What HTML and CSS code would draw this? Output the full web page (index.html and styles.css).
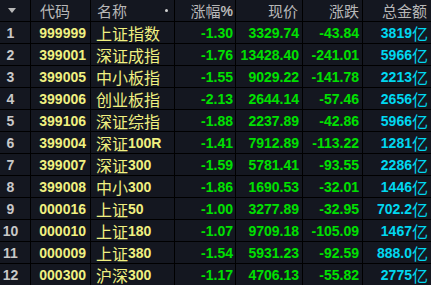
FILE: index.html
```html
<!DOCTYPE html>
<html lang="zh">
<head>
<meta charset="utf-8">
<link rel="stylesheet" href="styles.css">
</head>
<body>
<div class="grid">
  <div class="h c-idx"><span class="tri"></span></div>
  <div class="h c-code">代码</div>
  <div class="h c-name">名称<span class="dot"></span></div>
  <div class="h c-pct">涨幅<b>%</b></div>
  <div class="h c-num">现价</div>
  <div class="h c-chg">涨跌</div>
  <div class="h c-amt">总金额</div>

  <div class="idx">1</div><div class="code">999999</div><div class="name">上证指数</div><div class="g pct">-1.30</div><div class="g price">3329.74</div><div class="g chg">-43.84</div><div class="amt">3819<span>亿</span></div>
  <div class="idx">2</div><div class="code">399001</div><div class="name">深证成指</div><div class="g pct">-1.76</div><div class="g price">13428.40</div><div class="g chg">-241.01</div><div class="amt">5966<span>亿</span></div>
  <div class="idx">3</div><div class="code">399005</div><div class="name">中小板指</div><div class="g pct">-1.55</div><div class="g price">9029.22</div><div class="g chg">-141.78</div><div class="amt">2213<span>亿</span></div>
  <div class="idx">4</div><div class="code">399006</div><div class="name">创业板指</div><div class="g pct">-2.13</div><div class="g price">2644.14</div><div class="g chg">-57.46</div><div class="amt">2656<span>亿</span></div>
  <div class="idx">5</div><div class="code">399106</div><div class="name">深证综指</div><div class="g pct">-1.88</div><div class="g price">2237.89</div><div class="g chg">-42.86</div><div class="amt">5966<span>亿</span></div>
  <div class="idx">6</div><div class="code">399004</div><div class="name">深证<b>100R</b></div><div class="g pct">-1.41</div><div class="g price">7912.89</div><div class="g chg">-113.22</div><div class="amt">1281<span>亿</span></div>
  <div class="idx">7</div><div class="code">399007</div><div class="name">深证<b>300</b></div><div class="g pct">-1.59</div><div class="g price">5781.41</div><div class="g chg">-93.55</div><div class="amt">2286<span>亿</span></div>
  <div class="idx">8</div><div class="code">399008</div><div class="name">中小<b>300</b></div><div class="g pct">-1.86</div><div class="g price">1690.53</div><div class="g chg">-32.01</div><div class="amt">1446<span>亿</span></div>
  <div class="idx">9</div><div class="code">000016</div><div class="name">上证<b>50</b></div><div class="g pct">-1.00</div><div class="g price">3277.89</div><div class="g chg">-32.95</div><div class="amt">702.2<span>亿</span></div>
  <div class="idx">10</div><div class="code">000010</div><div class="name">上证<b>180</b></div><div class="g pct">-1.07</div><div class="g price">9709.18</div><div class="g chg">-105.09</div><div class="amt">1467<span>亿</span></div>
  <div class="idx">11</div><div class="code">000009</div><div class="name">上证<b>380</b></div><div class="g pct">-1.54</div><div class="g price">5931.23</div><div class="g chg">-92.59</div><div class="amt">888.0<span>亿</span></div>
  <div class="idx">12</div><div class="code">000300</div><div class="name">沪深<b>300</b></div><div class="g pct">-1.17</div><div class="g price">4706.13</div><div class="g chg">-55.82</div><div class="amt">2775<span>亿</span></div>
</div>
</body>
</html>
```

FILE: styles.css
```css
html, body {
  margin: 0;
  padding: 0;
  background: #000;
}
.grid {
  display: grid;
  grid-template-columns: 30px 59px 83px 60px 66px 59px 68px;
  grid-template-rows: 21px;
  grid-auto-rows: 21px;
  gap: 1px;
  background: #000;
  width: 431px;
  height: 285px;
  font-family: "Liberation Sans", Arial, "Noto Sans CJK SC", sans-serif;
  font-size: 14px;
  font-weight: bold;
}
.grid > div {
  background: #141720;
  display: flex;
  align-items: center;
  white-space: nowrap;
  line-height: 16px;
  min-width: 0;
}
.h {
  color: #b8b8b8;
  font-family: "Noto Sans CJK SC", sans-serif;
  font-weight: normal;
  font-size: 15px;
  justify-content: flex-end;
}
.h b {
  font-family: "Liberation Sans", sans-serif;
  font-weight: bold;
  font-size: 14px;
}
.h.c-idx {
  justify-content: flex-start;
  padding-left: 8px;
}
.tri {
  width: 0;
  height: 0;
  border-left: 4px solid transparent;
  border-right: 4px solid transparent;
  border-top: 5px solid #b8b8b8;
}
.h.c-code {
  justify-content: flex-start;
  padding-left: 9px;
}
.h.c-name {
  justify-content: space-between;
  padding-left: 6px;
  padding-right: 6px;
}
.dot {
  width: 3px;
  height: 3px;
  border-radius: 50%;
  background: #d0d0d0;
}
.h.c-pct { padding-right: 2px; }
.h.c-num { padding-right: 4px; }
.h.c-chg { padding-right: 3px; }
.h.c-amt { padding-right: 4px; }

.idx {
  color: #c8c8c8;
  justify-content: center;
  padding-right: 9px;
}
.code {
  color: #f0f080;
  justify-content: flex-end;
  padding-right: 4px;
}
.name {
  color: #f0f080;
  font-family: "Noto Sans CJK SC", sans-serif;
  font-weight: normal;
  font-size: 16px;
  padding-left: 5px;
}
.name b {
  font-family: "Liberation Sans", sans-serif;
  font-weight: bold;
  font-size: 14px;
}
.g {
  color: #00e000;
  justify-content: flex-end;
}
.pct { padding-right: 2px; }
.price { padding-right: 3px; }
.chg { padding-right: 3px; }
.amt {
  color: #00d8f0;
  justify-content: flex-end;
  padding-right: 3px;
}
.amt span {
  font-family: "Noto Sans CJK SC", sans-serif;
  font-weight: normal;
  font-size: 16px;
}
```
